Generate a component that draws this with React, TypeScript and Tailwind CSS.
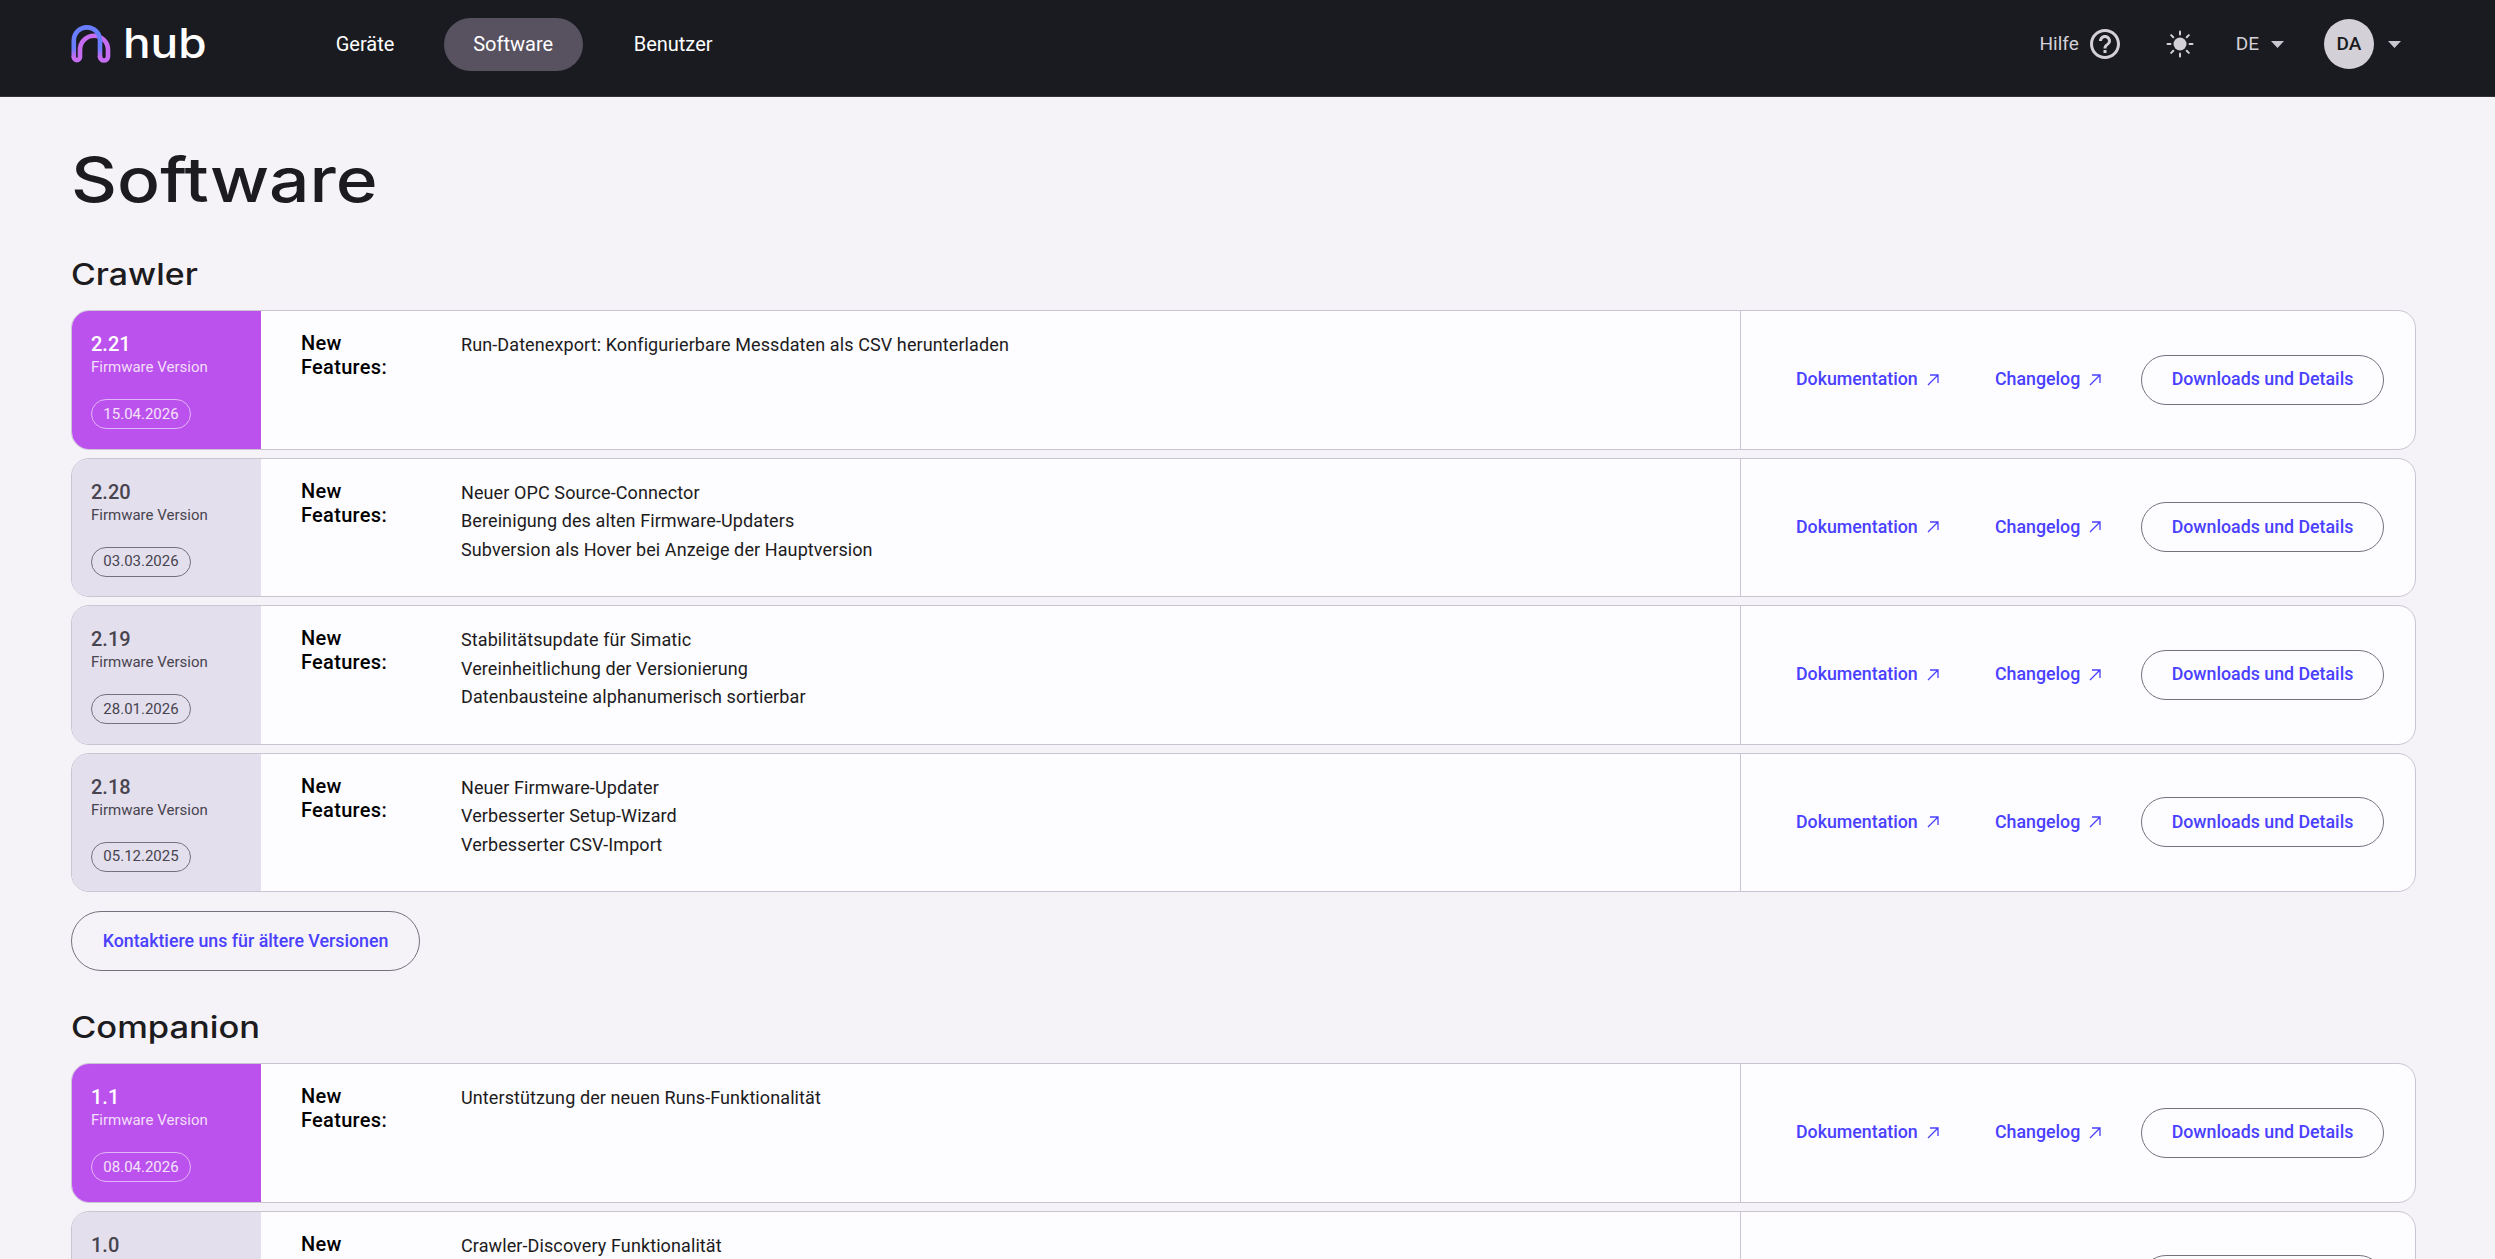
import { MdHelpOutline } from 'react-icons/md'

type Release = { version: string; date: string; features: string[]; latest?: boolean }

const crawler: Release[] = [
  { version: '2.21', date: '15.04.2026', latest: true, features: ['Run-Datenexport: Konfigurierbare Messdaten als CSV herunterladen'] },
  { version: '2.20', date: '03.03.2026', features: ['Neuer OPC Source-Connector', 'Bereinigung des alten Firmware-Updaters', 'Subversion als Hover bei Anzeige der Hauptversion'] },
  { version: '2.19', date: '28.01.2026', features: ['Stabilitätsupdate für Simatic', 'Vereinheitlichung der Versionierung', 'Datenbausteine alphanumerisch sortierbar'] },
  { version: '2.18', date: '05.12.2025', features: ['Neuer Firmware-Updater', 'Verbesserter Setup-Wizard', 'Verbesserter CSV-Import'] },
]

const companion: Release[] = [
  { version: '1.1', date: '08.04.2026', latest: true, features: ['Unterstützung der neuen Runs-Funktionalität'] },
  { version: '1.0', date: '12.02.2026', features: ['Crawler-Discovery Funktionalität'] },
]

function Logo() {
  return (
    <svg width="40" height="39" viewBox="0 0 40 39" fill="none">
      <defs>
        <linearGradient id="logoBlue" x1="0" y1="0" x2="0" y2="1">
          <stop offset="0%" stopColor="#6a7dff" />
          <stop offset="70%" stopColor="#6a7dff" />
          <stop offset="100%" stopColor="#c56cf0" />
        </linearGradient>
      </defs>
      <path
        d="M29 31.5A4 4 0 0 0 37 31.5V24.7A14 14 0 0 0 9 24.7V32A3.1 3.1 0 0 1 2.8 32"
        stroke="#c56cf0"
        strokeWidth="4.6"
        strokeLinecap="round"
      />
      <path d="M2.8 32V15.5A13.1 13.1 0 0 1 29 15.5V32" stroke="url(#logoBlue)" strokeWidth="4.6" strokeLinecap="round" />
    </svg>
  )
}

function Caret() {
  return (
    <svg width="13" height="7" viewBox="0 0 13 7" className="fill-[#c9c6cf]">
      <path d="M0 0H13L6.5 7Z" />
    </svg>
  )
}

function Sun() {
  const rays = [0, 45, 90, 135, 180, 225, 270, 315]
  return (
    <svg width="28" height="28" viewBox="0 0 28 28">
      <circle cx="14" cy="14" r="6.5" fill="#d3d0d8" />
      {rays.map(r => (
        <line key={r} x1="14" y1="1.5" x2="14" y2="4.5" stroke="#d3d0d8" strokeWidth="2" strokeLinecap="round" transform={`rotate(${r} 14 14)`} />
      ))}
    </svg>
  )
}

function ExtLink({ label, className }: { label: string; className: string }) {
  return (
    <a className={`flex items-center gap-[9px] text-[#4a40ff] font-medium text-[17.8px] ${className}`}>
      {label}
      <svg width="12" height="12" viewBox="0 0 12 12" fill="none" stroke="#4a40ff" strokeWidth="1.3">
        <path d="M1 11L11 1M3 1H11V9" />
      </svg>
    </a>
  )
}

function ReleaseRow({ release }: { release: Release }) {
  const { version, date, features, latest } = release
  return (
    <div className="flex h-[139.5px] rounded-[18px] border border-[#c9c5d3] bg-[#fdfcff] overflow-hidden">
      <div className={`w-[189px] shrink-0 pl-[19px] pt-[21px] ${latest ? 'bg-[#bc52ee] text-white' : 'bg-[#e3dfed] text-[#48444f]'}`}>
        <div className="text-[20px] font-medium leading-[24px]">{version}</div>
        <div className={`text-[15px] leading-[22px] ${latest ? 'text-[#f3def9]' : ''}`}>Firmware Version</div>
        <div
          className={`mt-[21px] w-[100px] h-[30px] rounded-full border flex items-center justify-center text-[15px] ${
            latest ? 'border-[#e3b5f7] text-[#f5e3fb]' : 'border-[#75717d]'
          }`}
        >
          {date}
        </div>
      </div>
      <div className="flex flex-1 pl-[40px] pt-[20px]">
        <div className="w-[160px] shrink-0 text-[20px] font-medium leading-[24px] tracking-[0.3px] text-black">
          New
          <br />
          Features:
        </div>
        <div className="text-[18px] tracking-[0.1px] leading-[28.5px] text-[#1c1b20]">
          {features.map(f => (
            <div key={f}>{f}</div>
          ))}
        </div>
      </div>
      <div className="w-[675px] shrink-0 border-l border-[#c9c5d3] flex items-center pl-[55px]">
        <ExtLink label="Dokumentation" className="w-[199px]" />
        <ExtLink label="Changelog" className="w-[146px]" />
        <a className="w-[243px] h-[50px] rounded-full border border-[#75717d] flex items-center justify-center text-[#4a40ff] font-medium text-[17.8px]">
          Downloads und Details
        </a>
      </div>
    </div>
  )
}

export default function App() {
  return (
    <div className="h-screen overflow-hidden bg-[#f5f3f8] font-['Roboto',sans-serif]">
      <header className="h-[97px] bg-[#1a1b20] border-b border-[#33333a] flex items-center pb-[8px] pl-[71px] pr-[94px] text-white">
        <Logo />
        <span className="ml-[12px] font-['Inter',sans-serif] font-medium text-[41px] leading-none origin-left scale-x-[1.12] mt-[-2px]">hub</span>
        <nav className="flex items-center ml-[138px] text-[20px]">
          <a className="w-[57px]">Geräte</a>
          <a className="ml-[51px] w-[139px] h-[53px] rounded-full bg-[#575160] flex items-center justify-center">Software</a>
          <a className="ml-[51px]">Benutzer</a>
        </nav>
        <div className="ml-auto flex items-center text-[#d3d0d8] text-[19px]">
          <span>Hilfe</span>
          <MdHelpOutline size={36} className="ml-[8px]" />
          <span className="ml-[43px]">
            <Sun />
          </span>
          <span className="ml-[42px]">DE</span>
          <span className="ml-[12px]">
            <Caret />
          </span>
          <div className="ml-[40px] w-[50px] h-[50px] rounded-full bg-[#d3d0d8] text-[#1a1b20] font-medium flex items-center justify-center">DA</div>
          <span className="ml-[14px]">
            <Caret />
          </span>
        </div>
      </header>
      <main className="px-[71px] pr-[79px]">
        <h1 className="mt-[44px] font-['Inter',sans-serif] font-medium text-[62px] leading-[78px] text-[#1c1b20] origin-left scale-x-[1.15]">Software</h1>
        <h2 className="mt-[35px] font-['Inter',sans-serif] font-medium text-[30px] leading-[40px] text-[#1c1b20] origin-left scale-x-[1.13]">Crawler</h2>
        <div className="mt-[16px] flex flex-col gap-[8px]">
          {crawler.map(r => (
            <ReleaseRow key={r.version} release={r} />
          ))}
        </div>
        <a className="mt-[19px] w-[349px] h-[60px] rounded-full border border-[#75717d] flex items-center justify-center text-[#4a40ff] font-medium text-[17.8px]">
          Kontaktiere uns für ältere Versionen
        </a>
        <h2 className="mt-[36px] font-['Inter',sans-serif] font-medium text-[30px] leading-[40px] text-[#1c1b20] origin-left scale-x-[1.15]">Companion</h2>
        <div className="mt-[16px] flex flex-col gap-[8px]">
          {companion.map(r => (
            <ReleaseRow key={r.version} release={r} />
          ))}
        </div>
      </main>
    </div>
  )
}
